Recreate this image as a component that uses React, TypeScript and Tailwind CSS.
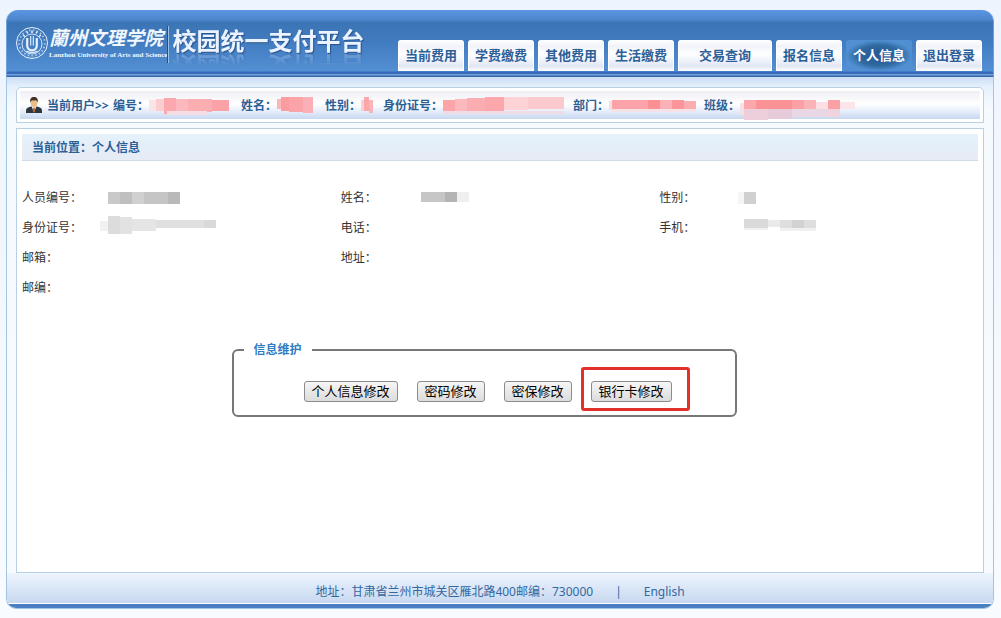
import { useState } from 'react';

type Cell = [number, number, number, number, string];

const NAV_ITEMS = [
  { label: '当前费用' },
  { label: '学费缴费' },
  { label: '其他费用' },
  { label: '生活缴费' },
  { label: '交易查询', wide: true },
  { label: '报名信息' },
  { label: '个人信息' },
  { label: '退出登录' },
];

const USER_FIELDS: { label: string; width: number; cells: Cell[] }[] = [
  {
    label: '编号：',
    width: 92,
    cells: [
      [0, 4, 7, 11, '#f9e4e8'],
      [7, 3, 8, 12, '#fbccd0'],
      [15, 2, 12, 16, '#fba9ae'],
      [27, 3, 12, 13, '#fcb8bc'],
      [39, 3, 24, 13, '#fbaeb2'],
      [63, 4, 17, 11, '#fba2a8'],
      [18, 15, 40, 4, '#f5dde6'],
    ],
  },
  {
    label: '姓名：',
    width: 48,
    cells: [
      [0, 3, 4, 10, '#fbb6b8'],
      [4, 1, 8, 14, '#fb9ca0'],
      [12, 1, 14, 15, '#fba4a8'],
      [26, 1, 10, 16, '#fbb0b6'],
    ],
  },
  {
    label: '性别：',
    width: 22,
    cells: [
      [0, 4, 4, 11, '#fbcfd2'],
      [3, 1, 5, 14, '#fba6aa'],
      [8, 4, 4, 13, '#fbb4b8'],
    ],
  },
  {
    label: '身份证号：',
    width: 130,
    cells: [
      [0, 4, 12, 12, '#fba5a9'],
      [12, 3, 12, 13, '#fbb9bd'],
      [24, 2, 18, 14, '#fbadb1'],
      [42, 1, 19, 15, '#fba7ab'],
      [61, 1, 24, 13, '#fdd3d6'],
      [85, 1, 36, 12, '#fcc9cd'],
      [0, 15, 121, 3, '#efdce6'],
    ],
  },
  {
    label: '部门：',
    width: 95,
    cells: [
      [0, 5, 3, 9, '#fbdcdf'],
      [3, 4, 36, 9, '#fba3a8'],
      [39, 4, 12, 9, '#fb9094'],
      [51, 4, 12, 9, '#fbb1b6'],
      [63, 4, 12, 9, '#fb9599'],
      [75, 5, 12, 9, '#fbacb0'],
      [3, 13, 84, 3, '#f5e1e8'],
    ],
  },
  {
    label: '班级：',
    width: 120,
    cells: [
      [0, 7, 4, 12, '#f5e1e6'],
      [4, 4, 12, 9, '#fba7ab'],
      [16, 4, 36, 9, '#fb9296'],
      [52, 4, 12, 9, '#fba1a6'],
      [64, 4, 12, 9, '#fbb3b8'],
      [76, 6, 12, 8, '#fbdfe3'],
      [88, 4, 12, 9, '#fba0a5'],
      [100, 6, 15, 7, '#fbe5e9'],
      [4, 13, 24, 11, '#eccfdb'],
      [28, 13, 24, 10, '#e8cbda'],
      [52, 13, 36, 8, '#ead7e5'],
      [88, 13, 12, 8, '#f1d3de'],
    ],
  },
];

const PROFILE_ROWS: { label: string; cells?: Cell[] }[][] = [
  [
    {
      label: '人员编号：',
      cells: [
        [1, 4, 12, 12, '#c9c9c9'],
        [13, 4, 12, 12, '#bfbfbf'],
        [25, 4, 12, 12, '#d0d0d0'],
        [37, 4, 24, 12, '#c5c5c5'],
        [61, 4, 12, 12, '#b9b9b9'],
      ],
    },
    {
      label: '姓名：',
      cells: [
        [-5, 4, 24, 10, '#c6c6c6'],
        [19, 4, 12, 10, '#b4b4b4'],
        [31, 4, 12, 10, '#efefef'],
      ],
    },
    {
      label: '性别：',
      cells: [
        [-6, 4, 6, 12, '#f5f5f5'],
        [0, 4, 12, 12, '#d0d0d0'],
      ],
    },
  ],
  [
    {
      label: '身份证号：',
      cells: [
        [-7, 3, 8, 10, '#f1f1f1'],
        [1, -2, 12, 18, '#dcdcdc'],
        [13, -1, 12, 17, '#e2e2e2'],
        [25, 1, 24, 12, '#e5e5e5'],
        [49, 2, 48, 8, '#e0e0e0'],
        [97, 2, 12, 8, '#d9d9d9'],
      ],
    },
    { label: '电话：' },
    {
      label: '手机：',
      cells: [
        [0, 1, 24, 9, '#dadada'],
        [24, 2, 12, 7, '#eaeaea'],
        [36, 2, 12, 8, '#dedede'],
        [48, 2, 12, 8, '#d2d2d2'],
        [60, 2, 12, 8, '#dedede'],
        [0, 10, 24, 2, '#f1f1f1'],
        [36, 10, 36, 3, '#f1f1f1'],
      ],
    },
  ],
  [{ label: '邮箱：' }, { label: '地址：' }, { label: '' }],
  [{ label: '邮编：' }, { label: '' }, { label: '' }],
];

const BUTTON_CLASS =
  'relative h-[21px] px-[7px] border border-[#8c8c8c] rounded-[3px] bg-gradient-to-b from-[#f6f6f6] to-[#dcdcdc] text-[13px] leading-[19px] text-black whitespace-nowrap hover:to-[#d0d0d0]';

// Hidden personal values are drawn as coloured blocks
function Masked({ cells, width }: { cells: Cell[]; width: number }) {
  return (
    <svg width={width} height={20} className="overflow-visible shrink-0" aria-hidden="true">
      {cells.map(([x, y, w, h, fill], i) => (
        <rect key={i} x={x} y={y} width={w} height={h} fill={fill} />
      ))}
    </svg>
  );
}

function Emblem() {
  return (
    <svg width="34" height="34" viewBox="0 0 34 34" fill="none" stroke="#e6f1fc" aria-hidden="true">
      <circle cx="17" cy="17" r="15.5" strokeWidth="1" />
      <circle cx="17" cy="17" r="12.8" strokeWidth="1.8" strokeDasharray="1.6 2.2" opacity="0.6" />
      <circle cx="17" cy="18" r="10" strokeWidth="0.9" />
      <path d="M12.200 12v7.500a4.800 4.800 0 0 0 9.600 0V12" strokeWidth="2.2" />
      <path d="M15.700 10v9.500M18.300 10v9.500" strokeWidth="1.1" />
      <path d="M11.500 25c3 2 8 2 11 0" strokeWidth="1.2" />
      <path d="M8 9l2 1.500M26 9l-2 1.500M17 4.500v2.500M12 5.500l.8 2M22 5.500l-.8 2" strokeWidth="1.5" />
    </svg>
  );
}

function UserIcon() {
  return (
    <svg width="16" height="17" viewBox="0 0 16 17" aria-hidden="true">
      <path d="M0 16v-2.500c0-2.200 1.600-3.200 5-4h6c3.400.8 5 1.800 5 4V16z" fill="#30363f" />
      <path d="M5.500 9h5L8 15.500z" fill="#f3f4f6" />
      <path d="M7.300 10.500h1.400l.5 3.500L8 15.800 6.800 14z" fill="#b96a2c" />
      <ellipse cx="8" cy="5.800" rx="3.400" ry="4.200" fill="#ecbd8b" />
      <path d="M4.200 5.800C3.600 2 5.200 0 8 0s4.400 2 3.800 5.800c-.5-1.600-1-2.400-2-2.600-1.400.5-2.800.4-3.800.1-.9.500-1.400 1.200-1.800 2.500z" fill="#423223" />
    </svg>
  );
}

export default function App() {
  const [active, setActive] = useState('个人信息');

  return (
    <div className="min-h-screen flex flex-col pl-[6px] pr-[7px] pt-[10px] pb-[9px] bg-gradient-to-b from-[#eef4fe] to-[#f8fbff] font-['Noto_Sans','Noto_Sans_CJK_SC',sans-serif] text-xs text-[#333]">
      <header className="h-[67px] shrink-0 flex justify-between rounded-t-[12px] bg-[linear-gradient(to_bottom,#5b94e0_0px,#4f88d0_9px,#3c75b5_13px,#427cc0_32px,#538fd3_61px,#3669ba_62px,#3669ba_64px,#72a2dc_64px,#72a2dc_65px,#3766a7_66px)] border-x border-[#6f9fd8]">
        <div className="flex items-start pt-4 pl-2">
          <Emblem />
          <div className="flex flex-col text-[#f1f7fe] whitespace-nowrap">
            <span className="text-[19px] leading-[24px] font-bold italic">蘭州文理学院</span>
            <span className="font-['Liberation_Serif',serif] text-[7px] leading-[10px] font-bold">
              Lanzhou University of Arts and Science
            </span>
          </div>
          <div className="mr-[3px] w-[2px] h-[37px] border-l border-[#284f83] bg-[#9bc0e6]" />
          <h1 className="text-2xl leading-[30px] font-bold text-[#eaf3ff] whitespace-nowrap [text-shadow:1px_1px_1px_#28528a] [-webkit-box-reflect:below_-5px_linear-gradient(transparent_50%,rgba(255,255,255,0.3))]">
            校园统一支付平台
          </h1>
        </div>

        <nav className="flex gap-1 pt-[30px] pr-[11px]">
          {NAV_ITEMS.map((item) => (
            <button
              key={item.label}
              onClick={() => setActive(item.label)}
              className={`h-[31px] rounded-t-[3px] text-[13px] leading-[31px] font-bold whitespace-nowrap ${
                item.wide ? 'w-[94px]' : 'w-[66px]'
              } ${
                active === item.label
                  ? 'bg-[radial-gradient(ellipse_farthest-side_at_50%_50%,#285c98_20%,#30689f_65%,#5090d2_100%)] text-white'
                  : 'bg-[linear-gradient(to_bottom,#ffffff_0%,#f0f3f8_20%,#ffffff_45%,#e2e7f5_85%,#ffffff_100%)] border-x border-white text-[#2c6099]'
              }`}
            >
              {item.label}
            </button>
          ))}
        </nav>
      </header>

      <div className="flex-1 flex flex-col px-[9px] pt-[10px] border-x border-[#a3c5e2] bg-[linear-gradient(to_bottom,#cbdef5_0px,#e6f1fd_10px,#f5faff_30px,#f7fbff_100%)]">
        <section className="h-9 shrink-0 p-[3px] rounded-t-[5px] border border-[#b9d0e3] bg-white">
          <div className="h-full flex items-center pl-[6px] pt-px bg-[linear-gradient(to_bottom,#eeeef5_0%,#ffffff_45%,#e8effb_70%,#c8d8f0_100%)] font-bold text-[#2b6097] whitespace-nowrap">
            <UserIcon />
            <span className="ml-[5px] w-[66px]">当前用户&gt;&gt;</span>
            {USER_FIELDS.map((field) => (
              <div key={field.label} className="flex items-center">
                <span>{field.label}</span>
                <Masked cells={field.cells} width={field.width} />
              </div>
            ))}
          </div>
        </section>

        <main className="flex-1 mt-[5px] p-[5px] border border-[#b9d0e3] bg-white">
          <h2 className="h-[27px] pl-[10px] border-b border-[#d0dae8] bg-gradient-to-b from-[#e4f1fb] to-[#e6ebf5] leading-[27px] font-bold text-[#2b6097]">
            当前位置：个人信息
          </h2>

          <table className="w-full mt-[22px] table-fixed">
            <tbody>
              {PROFILE_ROWS.map((row, i) => (
                <tr key={i} className="h-[30px]">
                  {row.map((field, j) => (
                    <td key={j} className="p-0 align-middle">
                      <div className="flex items-center">
                        <span className="w-[85px]">{field.label}</span>
                        {field.cells && <Masked cells={field.cells} width={110} />}
                      </div>
                    </td>
                  ))}
                </tr>
              ))}
            </tbody>
          </table>

          <div className="mt-[38px] pr-8">
            <fieldset className="w-[505px] max-w-full mx-auto px-[10px] border-2 border-[#777] rounded-[6px]">
              <legend className="px-[10px] leading-[18px] font-bold text-[#2f7cc2]">信息维护</legend>
              <div className="flex gap-[19px] pl-[60px] pt-[22px] pb-[13px]">
                <button className={BUTTON_CLASS}>个人信息修改</button>
                <button className={BUTTON_CLASS}>密码修改</button>
                <button className={BUTTON_CLASS}>密保修改</button>
                <button className={BUTTON_CLASS}>
                  银行卡修改
                  <span className="absolute -left-[11px] -right-[19px] -top-[15px] -bottom-[10px] border-3 border-[#e0322b] rounded-[3px] pointer-events-none" />
                </button>
              </div>
            </fieldset>
          </div>
        </main>
      </div>

      <footer className="shrink-0 border-x border-b border-[#a3c5e2] rounded-b-[10px] overflow-hidden bg-white text-[#33689f]">
        <div className="h-[30px] flex items-center justify-center pt-2 bg-gradient-to-b from-[#edf5fe] to-[#c8d8f0]">
          <span>地址：甘肃省兰州市城关区雁北路400邮编：730000</span>
          <span className="mx-[22px]">|</span>
          <a href="#english">English</a>
        </div>
        <div className="mt-px h-[4px] bg-[#4a80c1]" />
      </footer>
    </div>
  );
}
